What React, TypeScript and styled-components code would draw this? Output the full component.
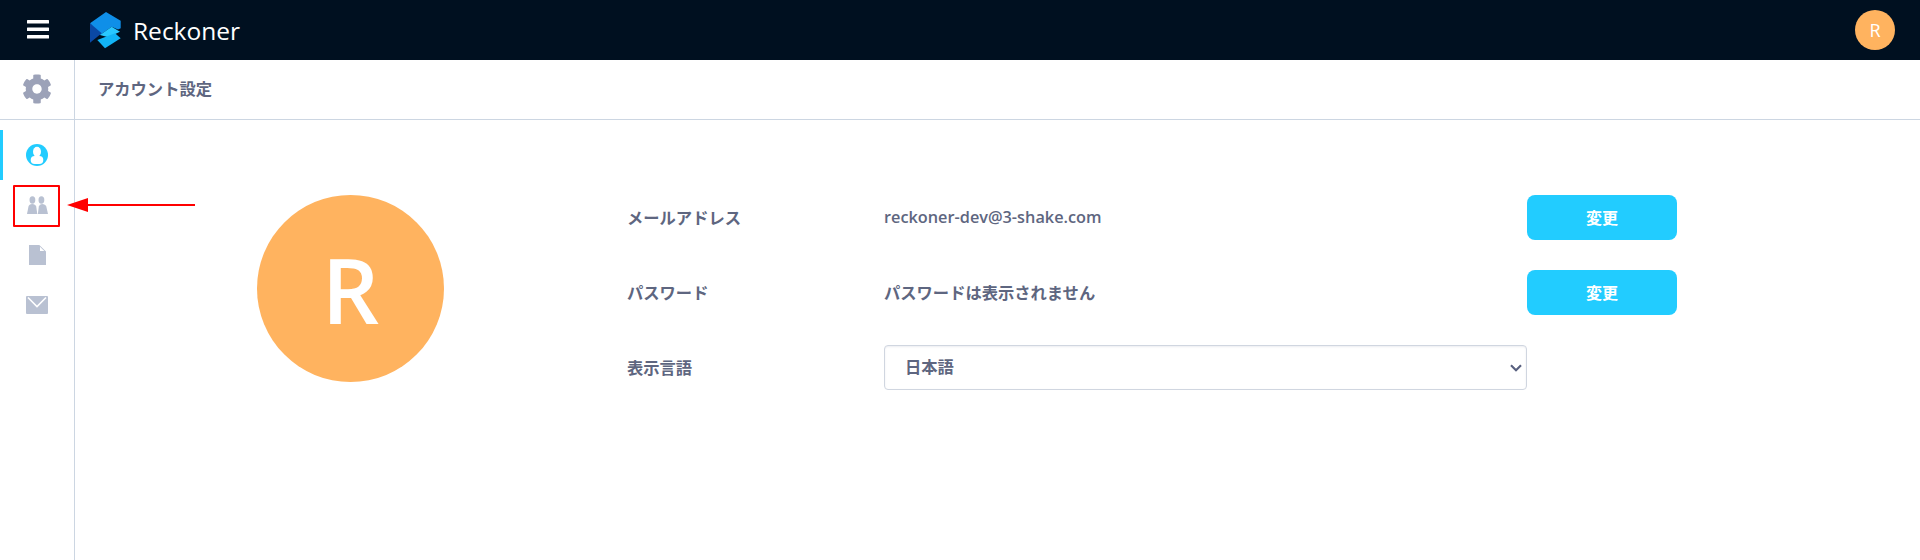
import React from "react";
import styled, { createGlobalStyle } from "styled-components";
import { FaCog } from "react-icons/fa";

const Global = createGlobalStyle`
  html, body { margin: 0; padding: 0; background: #fff; }
  body { font-family: "Open Sans", "Noto Sans CJK JP", sans-serif; color: #5e6680; }
`;

const Page = styled.div`
  position: relative;
  display: flex;
  flex-direction: column;
  width: 1920px;
  height: 560px;
  overflow: hidden;
`;

const Header = styled.header`
  display: flex;
  align-items: center;
  height: 60px;
  background: #001020;
  padding: 0 25px 0 27px;
  flex: none;
`;

const MenuIcon = styled.svg`
  width: 22px;
  height: 20px;
  color: #fff;
`;

const Logo = styled.svg`
  width: 32px;
  height: 37px;
  margin-left: 41px;
`;

const Brand = styled.span`
  margin-left: 11px;
  font-family: "Open Sans", sans-serif;
  font-size: 24.5px;
  font-weight: 500;
  color: #fff;
`;

const HeaderAvatar = styled.div`
  margin-left: auto;
  width: 40px;
  height: 40px;
  border-radius: 50%;
  background: #ffb35f;
  color: #fff;
  font-size: 18px;
  font-weight: 500;
  display: flex;
  align-items: center;
  justify-content: center;
`;

const Body = styled.div`
  display: flex;
  flex: 1;
  min-height: 0;
`;

const Sidebar = styled.nav`
  width: 74px;
  flex: none;
  border-right: 1px solid #ccd6e2;
  display: flex;
  flex-direction: column;
`;

const SideTop = styled.div`
  height: 60px;
  box-sizing: border-box;
  border-bottom: 1px solid #ccd6e2;
  margin: 0 -1px 10px 0;
  display: flex;
  align-items: center;
  justify-content: center;
  color: #9ca2b8;
  padding: 0 1px 2px 0;
`;

const SideItem = styled.div<{ $active?: boolean }>`
  height: 50px;
  display: flex;
  align-items: center;
  justify-content: center;
  color: #b9c1d2;
  border-left: 3px solid ${(p) => (p.$active ? "#22ccff" : "transparent")};
  padding-right: 3px;
  box-sizing: border-box;
`;

const Main = styled.main`
  flex: 1;
  min-width: 0;
`;

const TitleBar = styled.div`
  height: 60px;
  box-sizing: border-box;
  padding: 0 0 3px 23px;
  border-bottom: 1px solid #ccd6e2;
  display: flex;
  align-items: center;
  font-size: 16.3px;
  font-weight: 600;
`;

const Content = styled.div`
  display: flex;
  padding: 75px 0 0 182px;
`;

const BigAvatar = styled.div`
  width: 187px;
  height: 187px;
  border-radius: 50%;
  background: #ffb35f;
  color: #fff;
  font-size: 90px;
  font-weight: 600;
  display: flex;
  align-items: center;
  justify-content: center;
  flex: none;
`;

const Form = styled.div`
  margin-left: 183px;
  display: grid;
  grid-template-columns: 257px 643px 150px;
  grid-auto-rows: 45px;
  row-gap: 30px;
  align-items: center;
`;

const Label = styled.div`
  font-size: 16.3px;
  font-weight: 600;
  padding-bottom: 2px;
`;

const Value = styled.div`
  font-size: 16.3px;
  font-weight: 600;
  padding-bottom: 2px;
`;

const Button = styled.button`
  height: 45px;
  width: 150px;
  border: 0;
  border-radius: 8px;
  background: #22ccff;
  color: #fff;
  padding: 0 0 2px;
  font: 700 16px "Open Sans", "Noto Sans CJK JP", sans-serif;
`;

const chevron = encodeURIComponent(
  '<svg xmlns="http://www.w3.org/2000/svg" width="12" height="8" viewBox="0 0 12 8"><path d="M1 1.200 6 6.200l5-5" fill="none" stroke="#5a6280" stroke-width="2.200"/></svg>'
);

const Select = styled.select`
  appearance: none;
  height: 45px;
  width: 100%;
  box-sizing: border-box;
  border: 1px solid #d0d6e0;
  border-radius: 4px;
  background: #fff url("data:image/svg+xml,${chevron}") no-repeat right 4px center;
  box-shadow: inset 0 1px 2px rgba(0, 30, 80, 0.08);
  color: #5e6680;
  padding: 0 0 2px 20px;
  font: 600 16.3px "Open Sans", "Noto Sans CJK JP", sans-serif;
`;

const Marker = styled.div`
  position: absolute;
  left: 13px;
  top: 185px;
  width: 47px;
  height: 42px;
  box-sizing: border-box;
  border: 2px solid #f00;
  border-radius: 1px;
`;

const Arrow = styled.svg`
  position: absolute;
  left: 66px;
  top: 196px;
  width: 129px;
  height: 18px;
`;

export default function App() {
  return (
    <Page>
      <Global />
      <Header>
        <MenuIcon viewBox="0 0 22 20">
          <rect x="0" y="0" width="22" height="3.6" rx="0.5" fill="currentColor" />
          <rect x="0" y="7.4" width="22" height="3.6" rx="0.5" fill="currentColor" />
          <rect x="0" y="15" width="22" height="3.6" rx="0.5" fill="currentColor" />
        </MenuIcon>
        <Logo viewBox="0 0 32 37">
          <path d="M0 11.300 16 0l14.700 8.700v7.600l-2.700 1.200-6.300-2.800L10 23 0 11.300z" fill="#0f8fe8" />
          <path d="M0 11.300 11.700 21.300 0 30.700z" fill="#0a48a4" />
          <path d="M10 23 21.700 14.700 30 19.700 18.300 25.300z" fill="#29c8ff" />
          <path d="M7.300 28 25 21.300l5.700 5L15 36.300z" fill="#12b4f6" />
        </Logo>
        <Brand>Reckoner</Brand>
        <HeaderAvatar>R</HeaderAvatar>
      </Header>
      <Body>
        <Sidebar>
          <SideTop>
            <FaCog size={30} />
          </SideTop>
          <SideItem $active>
            <svg width="22" height="22" viewBox="0 0 22 22">
              <circle cx="11" cy="11" r="11" fill="#22ccff" />
              <ellipse cx="11" cy="7.800" rx="4" ry="5" fill="#fff" />
              <rect x="4.700" y="12" width="12.600" height="8" rx="4" fill="#fff" />
            </svg>
          </SideItem>
          <SideItem>
            <svg width="21" height="18" viewBox="0 0 21 18">
              <ellipse cx="5.400" cy="4" rx="2.900" ry="3.700" fill="currentColor" />
              <ellipse cx="14.400" cy="4" rx="2.900" ry="3.700" fill="currentColor" />
              <path d="M0 18 1.500 10.500Q2 8 5.200 8 8.500 8 9.200 10.500L10.300 18z" fill="currentColor" />
              <path d="M10.900 18 11.800 10.500Q12.400 8 15 8 18.500 8 19.300 10.500L21 18z" fill="currentColor" />
            </svg>
          </SideItem>
          <SideItem>
            <svg width="17" height="20" viewBox="0 0 17 20">
              <path d="M0 0h10.300L17 6.500V20H0z" fill="currentColor" />
              <path d="M11 1.800 15.300 6H11z" fill="#fff" />
            </svg>
          </SideItem>
          <SideItem>
            <svg width="22" height="18" viewBox="0 0 22 18">
              <rect width="22" height="18" rx="1" fill="currentColor" />
              <path d="M2 1.500 11 10.500l9-9" fill="none" stroke="#fff" strokeWidth="1.600" />
            </svg>
          </SideItem>
        </Sidebar>
        <Main>
          <TitleBar>アカウント設定</TitleBar>
          <Content>
            <BigAvatar>R</BigAvatar>
            <Form>
              <Label>メールアドレス</Label>
              <Value>reckoner-dev@3-shake.com</Value>
              <Button>変更</Button>
              <Label>パスワード</Label>
              <Value>パスワードは表示されません</Value>
              <Button>変更</Button>
              <Label>表示言語</Label>
              <Select defaultValue="ja">
                <option value="ja">日本語</option>
                <option value="en">English</option>
              </Select>
            </Form>
          </Content>
        </Main>
      </Body>
      <Marker />
      <Arrow viewBox="0 0 129 18">
        <path d="M129 9H20" stroke="#f00" strokeWidth="2" />
        <path d="M1 9 22 2v14z" fill="#f00" />
      </Arrow>
    </Page>
  );
}
